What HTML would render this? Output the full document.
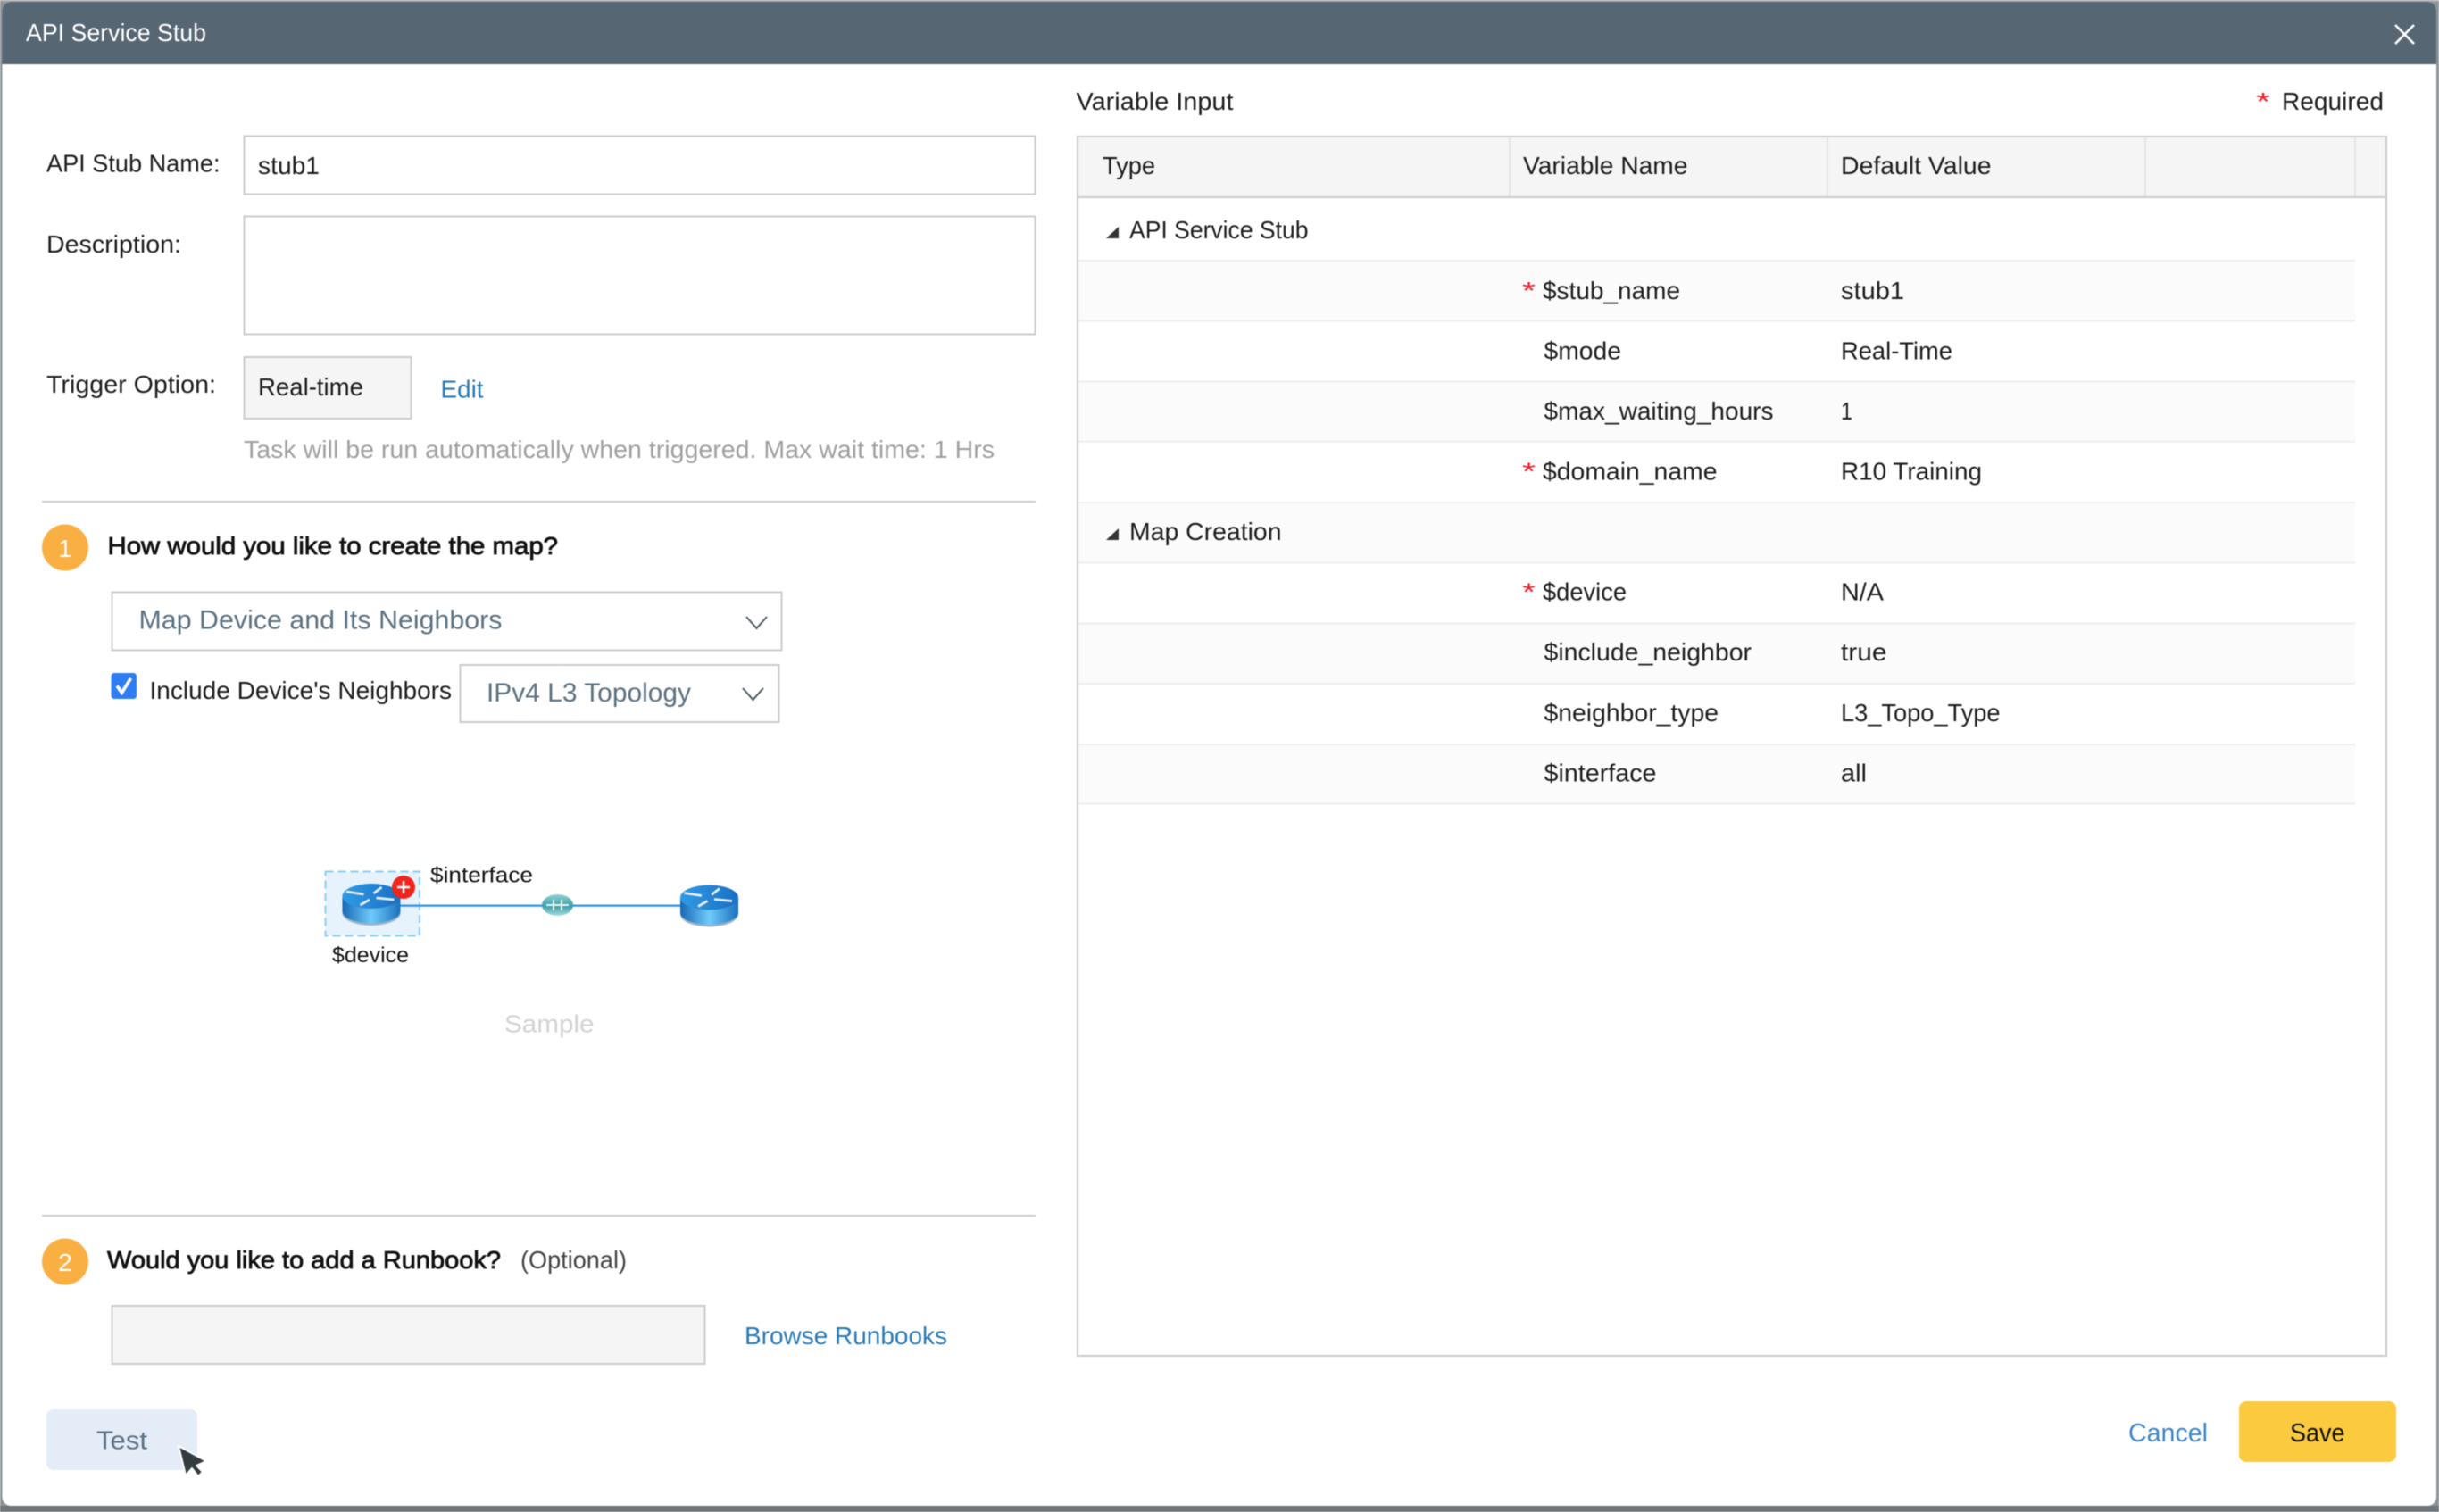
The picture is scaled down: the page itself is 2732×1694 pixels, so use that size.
<!DOCTYPE html>
<html><head><meta charset="utf-8"><title>API Service Stub</title>
<style>
html,body{margin:0;padding:0;background:#fff;width:2732px;height:1694px;overflow:hidden}
svg{display:block;filter:blur(.6px)}
text{font-family:"Liberation Sans",sans-serif;font-size:28px;fill:#1d1d1d}
.l{fill:#2a7ab5}.m{fill:#5c7282}.g{fill:#a0a0a0}.b{stroke:#111;stroke-width:.8px;fill:#111}.w{fill:#fff}
</style></head><body>
<svg width="2732" height="1694" viewBox="0 0 2732 1694" xmlns="http://www.w3.org/2000/svg">
<defs>
<linearGradient id="rb" x1="0" x2="1" y1="0" y2="0"><stop offset="0" stop-color="#1768b4"/><stop offset=".5" stop-color="#6fcbfb"/><stop offset="1" stop-color="#1a70bd"/></linearGradient>
<linearGradient id="rt" x1="0" x2="1" y1="0" y2="0"><stop offset="0" stop-color="#2f9be6"/><stop offset="1" stop-color="#1a6fc2"/></linearGradient>
<linearGradient id="tl" x1="0" x2="0" y1="0" y2="1"><stop offset="0" stop-color="#8fd3d6"/><stop offset=".55" stop-color="#3b9ea6"/><stop offset="1" stop-color="#a8dcdf"/></linearGradient>
<g id="router">
<ellipse cx="32.5" cy="33" rx="32.5" ry="14" fill="#9fb4c4"/>
<path d="M0 14V31a32.5 13.5 0 0 0 65 0V14z" fill="url(#rb)"/>
<ellipse cx="32.5" cy="14" rx="32.5" ry="14" fill="url(#rt)"/>
<path d="M4.500 9L24 12M35 11L44 4M20 24L30.500 18M38 16L58 18" stroke="#e3ebf1" stroke-width="2.800" fill="none"/>
</g>
</defs>
<rect width="2732" height="1694" fill="#8d9398"/>
<rect width="2732" height="2" fill="#aaaaaa"/>
<rect x="0" y="1687" width="2732" height="7" fill="#6f767b"/>
<rect x="2.500" y="2" width="2726.500" height="1685" rx="10" fill="#fff"/>
<path d="M2.500 72V12a10 10 0 0 1 10-10H2719a10 10 0 0 1 10 10V72z" fill="#566673"/>
<text class="w" x="29" y="46" textLength="202" lengthAdjust="spacingAndGlyphs">API Service Stub</text>
<path d="M2683 28L2704 49M2704 28L2683 49" stroke="#fff" stroke-width="2.600" fill="none"/>

<text x="52" y="192.500" textLength="194.500" lengthAdjust="spacingAndGlyphs">API Stub Name:</text>
<rect x="273.500" y="152.500" width="886" height="65" fill="#fff" stroke="#ccc" stroke-width="2"/>
<text x="289" y="195" textLength="69" lengthAdjust="spacingAndGlyphs">stub1</text>
<text x="52" y="283" textLength="151" lengthAdjust="spacingAndGlyphs">Description:</text>
<rect x="273.500" y="242.500" width="886" height="132" fill="#fff" stroke="#ccc" stroke-width="2"/>
<text x="52" y="440" textLength="190" lengthAdjust="spacingAndGlyphs">Trigger Option:</text>
<rect x="273.500" y="400" width="187" height="69" fill="#f5f5f5" stroke="#ccc" stroke-width="2"/>
<text x="289" y="443" textLength="118" lengthAdjust="spacingAndGlyphs">Real-time</text>
<text class="l" x="493.500" y="445.500" textLength="48" lengthAdjust="spacingAndGlyphs">Edit</text>
<text class="g" x="273" y="513" textLength="841" lengthAdjust="spacingAndGlyphs">Task will be run automatically when triggered. Max wait time: 1 Hrs</text>
<rect x="47" y="561" width="1113" height="2" fill="#ccc"/>

<circle cx="73" cy="613.500" r="26" fill="#f9af42"/>
<text class="w" x="65.500" y="624" textLength="15" lengthAdjust="spacingAndGlyphs">1</text>
<text class="b" x="120.500" y="621" textLength="504.500" lengthAdjust="spacingAndGlyphs">How would you like to create the map?</text>
<rect x="125.500" y="663.500" width="750" height="65" fill="#fff" stroke="#ccc" stroke-width="2"/>
<text class="m" x="155.500" y="704.500" style="font-size:30px" textLength="407" lengthAdjust="spacingAndGlyphs">Map Device and Its Neighbors</text>
<path d="M836 691L847.500 704L859 691" fill="none" stroke="#4f5b63" stroke-width="2"/>
<rect x="124.500" y="754" width="28.500" height="29" rx="3.500" fill="#2f7df3"/>
<path d="M131 768.500L136.500 776L146.500 760" fill="none" stroke="#fff" stroke-width="3.600"/>
<text x="167.500" y="783" textLength="338.500" lengthAdjust="spacingAndGlyphs">Include Device's Neighbors</text>
<rect x="515.500" y="745" width="357" height="64" fill="#fff" stroke="#ccc" stroke-width="2"/>
<text class="m" x="545" y="786" style="font-size:30px" textLength="229" lengthAdjust="spacingAndGlyphs">IPv4 L3 Topology</text>
<path d="M832 771L843.500 784L855 771" fill="none" stroke="#4f5b63" stroke-width="2"/>

<rect x="364.500" y="976.500" width="105.500" height="72" fill="#e6f2fc" stroke="#8fcdf8" stroke-width="2" stroke-dasharray="9 5"/>
<path d="M448 1014.700H763" stroke="#3a97e3" stroke-width="2.400"/>
<use href="#router" x="383.500" y="990"/>
<use href="#router" x="762" y="991.500"/>
<circle cx="452" cy="994" r="13" fill="#f0261c"/>
<path d="M445 994H459M452 987V1001" stroke="#fff" stroke-width="2.400"/>
<ellipse cx="624.500" cy="1014" rx="17.500" ry="12" fill="url(#tl)"/>
<path d="M612 1014H637M620 1008v12M629 1008v12" stroke="#e8f6f6" stroke-width="2"/>
<text x="482" y="988.500" style="font-size:24px;fill:#111" textLength="115" lengthAdjust="spacingAndGlyphs">$interface</text>
<text x="372" y="1078" style="font-size:24px;fill:#111" textLength="86" lengthAdjust="spacingAndGlyphs">$device</text>
<text x="565" y="1156.500" style="font-size:28px;fill:#d2d2d2" textLength="100.500" lengthAdjust="spacingAndGlyphs">Sample</text>

<rect x="47" y="1361" width="1113" height="2" fill="#ccc"/>
<circle cx="73" cy="1413.500" r="26" fill="#f9af42"/>
<text class="w" x="65" y="1424" textLength="16" lengthAdjust="spacingAndGlyphs">2</text>
<text class="b" x="120" y="1421" textLength="441" lengthAdjust="spacingAndGlyphs">Would you like to add a Runbook?</text>
<text x="583" y="1421" style="fill:#444" textLength="119" lengthAdjust="spacingAndGlyphs">(Optional)</text>
<rect x="125.500" y="1463" width="664" height="65" fill="#f5f5f5" stroke="#ccc" stroke-width="2"/>
<text class="l" x="834" y="1506" textLength="227" lengthAdjust="spacingAndGlyphs">Browse Runbooks</text>
<rect x="52" y="1579" width="169" height="68" rx="8" fill="#e4ecf8"/>
<text class="m" x="108" y="1623.500" style="font-size:29px" textLength="57" lengthAdjust="spacingAndGlyphs">Test</text>
<path d="M200 1620L208 1653L215 1645L222 1654L227 1649L220 1642L231 1637Z" fill="#2f383d" stroke="#fff" stroke-width="2" stroke-linejoin="round" opacity=".98"/>

<text x="1205.500" y="123" textLength="176" lengthAdjust="spacingAndGlyphs">Variable Input</text>
<text x="2527" y="123" style="fill:#f01c25;font-size:28px" textLength="16" lengthAdjust="spacingAndGlyphs">*</text>
<text x="2556" y="123" textLength="114" lengthAdjust="spacingAndGlyphs">Required</text>

<rect x="1207" y="153" width="1466" height="1366" fill="#fff" stroke="#ccc" stroke-width="2"/>
<rect x="1208" y="154" width="1464" height="66" fill="#f5f5f5"/>
<rect x="1207" y="220" width="1466" height="2" fill="#ccc"/>
<path d="M1691 154V220M2047 154V220M2403 154V220M2638 154V220" stroke="#e6e6e6" stroke-width="2"/>
<text x="1235" y="195" textLength="59" lengthAdjust="spacingAndGlyphs">Type</text>
<text x="1706" y="195" textLength="184.500" lengthAdjust="spacingAndGlyphs">Variable Name</text>
<text x="2062" y="195" textLength="168.500" lengthAdjust="spacingAndGlyphs">Default Value</text>

<g fill="#fbfbfb">
<rect x="1208" y="292" width="1430" height="67"/>
<rect x="1208" y="427" width="1430" height="67"/>
<rect x="1208" y="563" width="1430" height="67"/>
<rect x="1208" y="698" width="1430" height="67"/>
<rect x="1208" y="834" width="1430" height="67"/>
</g>
<g fill="#eeeeee">
<rect x="1208" y="291" width="1430" height="2"/>
<rect x="1208" y="358.500" width="1430" height="2"/>
<rect x="1208" y="426.500" width="1430" height="2"/>
<rect x="1208" y="494" width="1430" height="2"/>
<rect x="1208" y="562" width="1430" height="2"/>
<rect x="1208" y="629.500" width="1430" height="2"/>
<rect x="1208" y="697.500" width="1430" height="2"/>
<rect x="1208" y="765" width="1430" height="2"/>
<rect x="1208" y="833" width="1430" height="2"/>
<rect x="1208" y="899.500" width="1430" height="2"/>
</g>

<path d="M1253 254V267H1239Z" fill="#333"/>
<text x="1265" y="267" textLength="200.500" lengthAdjust="spacingAndGlyphs">API Service Stub</text>
<text x="1705" y="335" style="fill:#f01c25" textLength="15" lengthAdjust="spacingAndGlyphs">*</text>
<text x="1728" y="335" textLength="154" lengthAdjust="spacingAndGlyphs">$stub_name</text>
<text x="2062" y="335" textLength="71" lengthAdjust="spacingAndGlyphs">stub1</text>
<text x="1729.500" y="402.500" textLength="86.500" lengthAdjust="spacingAndGlyphs">$mode</text>
<text x="2062" y="402.500" textLength="125" lengthAdjust="spacingAndGlyphs">Real-Time</text>
<text x="1729.500" y="470" textLength="257" lengthAdjust="spacingAndGlyphs">$max_waiting_hours</text>
<text x="2062" y="470" textLength="13" lengthAdjust="spacingAndGlyphs">1</text>
<text x="1705" y="537.500" style="fill:#f01c25" textLength="15" lengthAdjust="spacingAndGlyphs">*</text>
<text x="1728" y="537.500" textLength="195.500" lengthAdjust="spacingAndGlyphs">$domain_name</text>
<text x="2062" y="537.500" textLength="158" lengthAdjust="spacingAndGlyphs">R10 Training</text>

<path d="M1253 592V605H1239Z" fill="#333"/>
<text x="1265" y="605" textLength="170.500" lengthAdjust="spacingAndGlyphs">Map Creation</text>
<text x="1705" y="672.500" style="fill:#f01c25" textLength="15" lengthAdjust="spacingAndGlyphs">*</text>
<text x="1728" y="672.500" textLength="94" lengthAdjust="spacingAndGlyphs">$device</text>
<text x="2062" y="672.500" textLength="48" lengthAdjust="spacingAndGlyphs">N/A</text>
<text x="1729.500" y="740" textLength="232.500" lengthAdjust="spacingAndGlyphs">$include_neighbor</text>
<text x="2062" y="740" textLength="51.500" lengthAdjust="spacingAndGlyphs">true</text>
<text x="1729.500" y="808" textLength="195.500" lengthAdjust="spacingAndGlyphs">$neighbor_type</text>
<text x="2062" y="808" textLength="178.500" lengthAdjust="spacingAndGlyphs">L3_Topo_Type</text>
<text x="1729.500" y="875.500" textLength="126" lengthAdjust="spacingAndGlyphs">$interface</text>
<text x="2062" y="875.500" textLength="29" lengthAdjust="spacingAndGlyphs">all</text>

<text x="2384" y="1615" style="fill:#3f86c6;font-size:29px" textLength="89" lengthAdjust="spacingAndGlyphs">Cancel</text>
<rect x="2508" y="1570" width="176" height="68" rx="8" fill="#fbca3e"/>
<text x="2565" y="1615" style="fill:#111;font-size:29px" textLength="61.500" lengthAdjust="spacingAndGlyphs">Save</text>
</svg>
</body></html>
